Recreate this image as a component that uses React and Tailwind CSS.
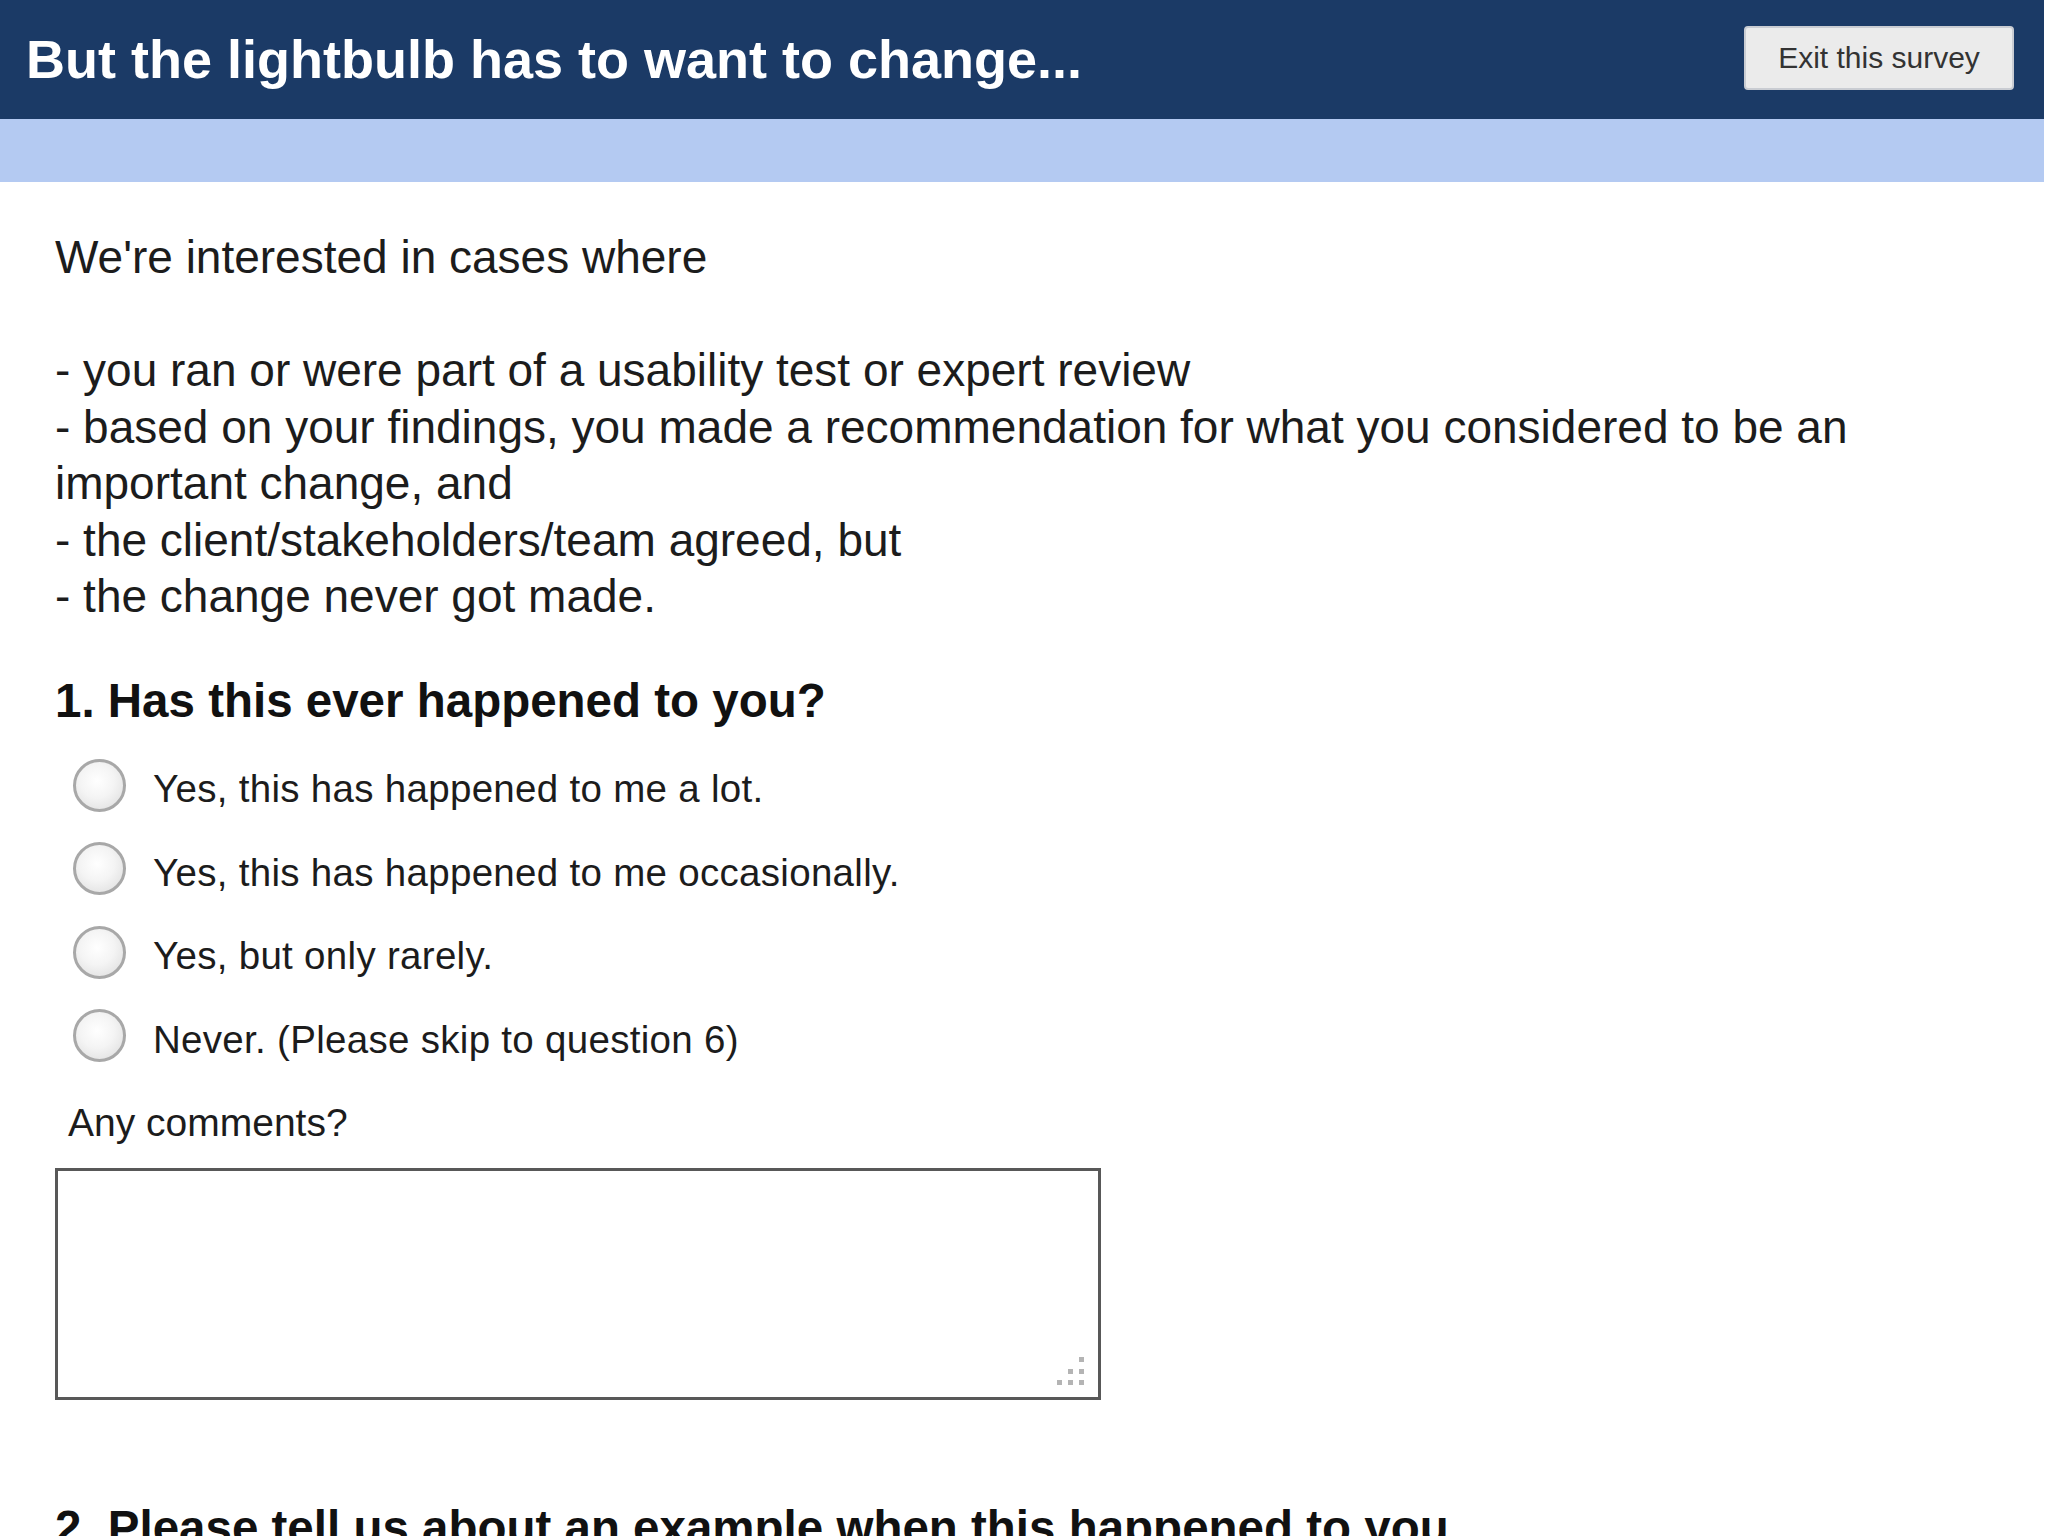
import React from "react";

const options = [
  "Yes, this has happened to me a lot.",
  "Yes, this has happened to me occasionally.",
  "Yes, but only rarely.",
  "Never. (Please skip to question 6)",
];

function Radio() {
  return (
    <span className="block w-[53px] h-[53px] shrink-0 rounded-full border-[3px] border-[#a8a8a8] bg-[radial-gradient(circle_at_45%_40%,#ffffff_0%,#f4f4f4_45%,#dadada_100%)]" />
  );
}

function ResizeHandle() {
  const dots = [
    [25, 0],
    [14, 12],
    [25, 12],
    [3, 23],
    [14, 23],
    [25, 23],
  ];
  return (
    <svg width="30" height="28" className="absolute right-[14px] bottom-[12px]">
      {dots.map(([x, y], i) => (
        <rect key={i} x={x} y={y} width="5" height="5" fill="#b4b4b4" />
      ))}
    </svg>
  );
}

export default function App() {
  return (
    <div className="w-[2048px] min-h-[1536px] bg-white overflow-hidden font-['Liberation_Sans',Arial,sans-serif]">
      <div className="w-[2044px]">
        <header className="h-[119px] bg-[#1b3a66] flex items-center justify-between pl-[26px] pr-[30px]">
          <h1 className="text-[54px] font-bold text-white leading-none -mt-[2px]">
            But the lightbulb has to want to change...
          </h1>
          <button className="h-[64px] w-[270px] -mt-[4px] rounded-[4px] border-2 border-[#c9ccd2] bg-[#ebebeb] text-[30px] text-[#333333] leading-none">
            Exit this survey
          </button>
        </header>
        <div className="h-[63px] bg-[#b4caf2]" />
      </div>

      <main className="pl-[55px] pt-[47px] text-[#1c1c1c]">
        <div className="text-[46px] leading-[56.5px] whitespace-nowrap">
          <p>We're interested in cases where</p>
          <p>&nbsp;</p>
          <p>- you ran or were part of a usability test or expert review</p>
          <p>- based on your findings, you made a recommendation for what you considered to be an</p>
          <p>important change, and</p>
          <p>- the client/stakeholders/team agreed, but</p>
          <p>- the change never got made.</p>
        </div>

        <h2 className="mt-[48px] text-[47.5px] leading-[56px] font-bold text-[#111111] whitespace-nowrap">
          1. Has this ever happened to you?
        </h2>

        <div className="mt-[15px]">
          {options.map((o) => (
            <label key={o} className="h-[83.5px] flex items-center pl-[18px] gap-[27px]">
              <Radio />
              <span className="mt-[8px] text-[38.5px] leading-none tracking-[0.3px] whitespace-nowrap">{o}</span>
            </label>
          ))}
        </div>

        <p className="mt-[22px] pl-[13px] text-[39px] leading-[46px]">Any comments?</p>

        <div className="relative mt-[22px] w-[1046px] h-[232px] border-[3px] border-[#585858] bg-white">
          <ResizeHandle />
        </div>

        <h2 className="mt-[100px] text-[47.5px] leading-[56px] font-bold text-[#111111] whitespace-nowrap">
          2. Please tell us about an example when this happened to you
        </h2>
      </main>
    </div>
  );
}
